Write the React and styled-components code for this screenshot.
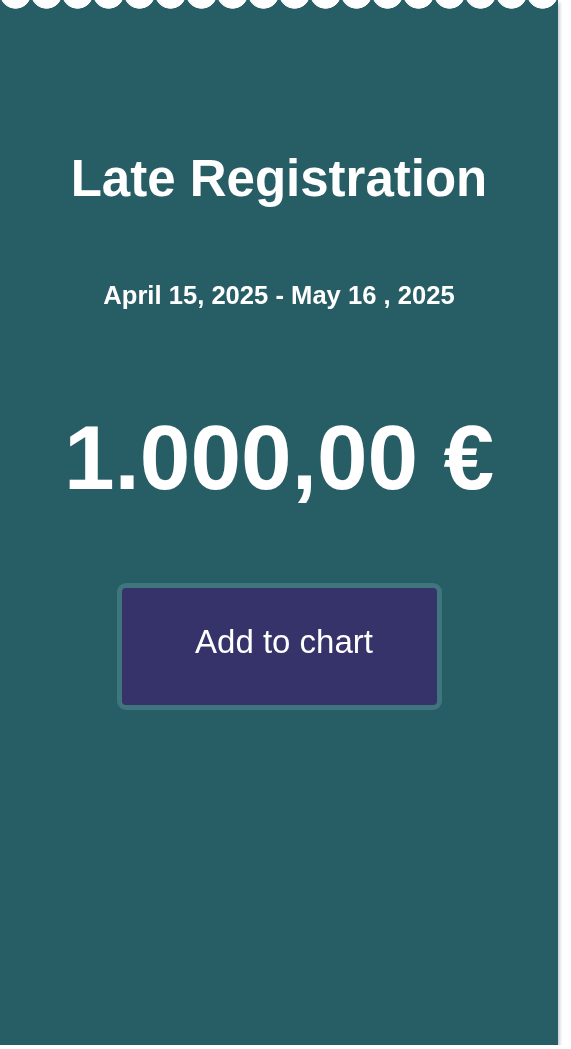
import React from "react";
import styled, { createGlobalStyle } from "styled-components";

const Global = createGlobalStyle`
  html, body { margin: 0; padding: 0; background: #ffffff; }
  body { font-family: "Liberation Sans", Arial, Helvetica, sans-serif; }
`;

const Shadow = styled.div`
  width: 558px;
  filter: drop-shadow(2px 2px 1.5px rgba(60, 80, 110, 0.28));
`;

const Card = styled.section`
  box-sizing: border-box;
  width: 558px;
  height: 1045px;
  background: #275d65;
  color: #ffffff;
  display: flex;
  flex-direction: column;
  align-items: center;
  padding-top: 153px;
  -webkit-mask-image: radial-gradient(circle 16px at 50% -7px, transparent 96%, #000 100%);
  -webkit-mask-size: 31px 100%;
  -webkit-mask-repeat: repeat-x;
  mask-image: radial-gradient(circle 16px at 50% -7px, transparent 96%, #000 100%);
  mask-size: 31px 100%;
  mask-repeat: repeat-x;
`;

const Title = styled.h1`
  margin: 0;
  font-size: 51px;
  line-height: 1;
  font-weight: 700;
`;

const Dates = styled.p`
  margin: 79px 0 0;
  font-size: 25.6px;
  line-height: 1;
  font-weight: 700;
`;

const Price = styled.div`
  margin-top: 103px;
  font-size: 91px;
  line-height: 1;
  font-weight: 700;
`;

const Button = styled.button`
  box-sizing: border-box;
  margin-top: 80px;
  width: 325px;
  height: 127px;
  padding: 0 0 8px 10px;
  border: 5px solid #3f757c;
  border-radius: 9px;
  background: #35336a;
  color: #ffffff;
  font-family: "Liberation Sans", Arial, sans-serif;
  font-size: 33px;
  cursor: pointer;
`;

export default function App() {
  return (
    <>
      <Global />
      <Shadow>
        <Card>
          <Title>Late Registration</Title>
          <Dates>April 15, 2025 - May 16 , 2025</Dates>
          <Price>1.000,00 €</Price>
          <Button>Add to chart</Button>
        </Card>
      </Shadow>
    </>
  );
}
